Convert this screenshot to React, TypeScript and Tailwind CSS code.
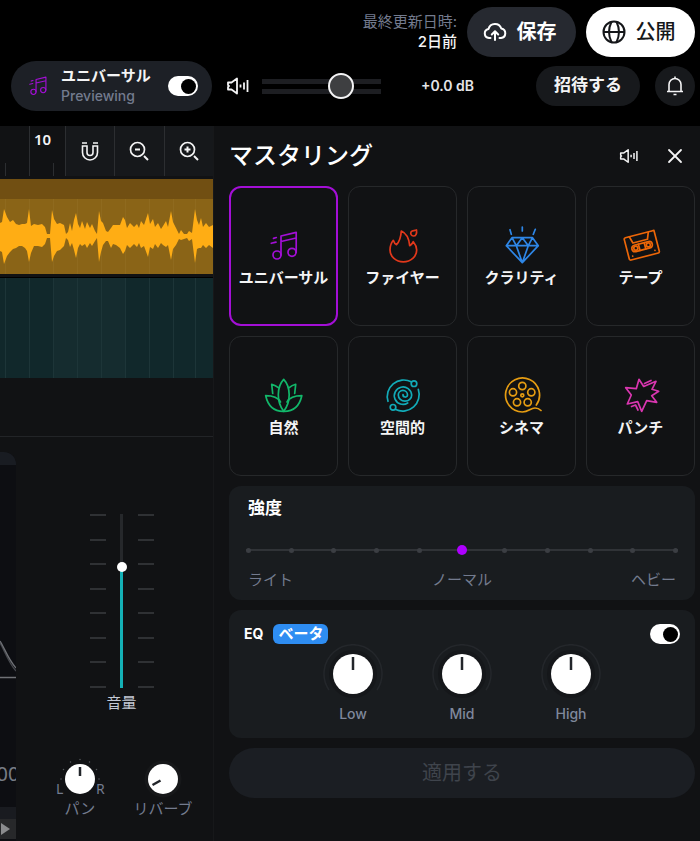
import type { ReactNode } from 'react';
import { X } from 'lucide-react';

type Preset = { name: string; color: string; icon: ReactNode };

// [x, above centre, below centre]
const WAVE = [
  [0, 13, 15], [2, 14, 16], [4, 27, 28], [7, 19, 20], [10, 14, 16], [13, 16, 13],
  [16, 12, 12], [19, 11, 10], [22, 12, 10], [25, 12, 12], [27, 13, 15], [29, 27, 26],
  [31, 10, 17], [34, 12, 10], [38, 11, 10], [42, 12, 11], [45, 9, 8], [47, 2, 2],
  [50, 2, 2], [52, 26, 26], [54, 17, 20], [57, 12, 15], [60, 13, 14], [64, 11, 10],
  [66, 2, 2], [68, 4, 4], [70, 13, 11], [72, 5, 7], [74, 16, 14], [76, 23, 22],
  [78, 12, 12], [80, 8, 8], [82, 15, 10], [85, 7, 8], [87, 14, 12], [90, 8, 7],
  [92, 12, 10], [95, 5, 5], [97, 2, 2], [99, 25, 26], [101, 15, 16], [103, 13, 9],
  [106, 5, 5], [108, 4, 5], [111, 8, 12], [113, 11, 8], [116, 11, 9], [120, 11, 12],
  [123, 19, 18], [125, 16, 15], [127, 8, 9], [130, 13, 12], [134, 9, 8], [137, 12, 11],
  [139, 8, 7], [141, 15, 12], [144, 11, 10], [148, 23, 21], [150, 12, 11], [153, 17, 13],
  [155, 9, 8], [158, 13, 12], [161, 7, 7], [163, 10, 9], [166, 15, 11], [168, 9, 9],
  [171, 25, 24], [173, 14, 13], [176, 8, 9], [179, 2, 3], [181, 6, 4], [184, 2, 3],
  [187, 2, 2], [189, 5, 5], [192, 3, 3], [195, 27, 27], [197, 16, 13], [199, 11, 12],
  [201, 18, 12], [203, 9, 9], [206, 13, 12], [209, 9, 9], [213, 11, 12],
];

const WAVE_MID = 37;
const wavePoints = [
  ...WAVE.map(([x, up]) => `${x},${WAVE_MID - up}`),
  ...[...WAVE].reverse().map(([x, , down]) => `${x},${WAVE_MID + down}`),
].join(' ');

const GRID_LINES = [5, 29, 53, 77, 101, 125, 149, 173, 195];

const notes = (
  <>
    <circle cx="13" cy="29" r="4" />
    <circle cx="28" cy="26.3" r="4" />
    <path d="M17 29V10l15.2-3.6v19.9M17 15.5 32.2 12M9.5 12.4l2.8-.9M7.3 17.3l4.7-1.2" />
  </>
);

const presets: Preset[] = [
  { name: 'ユニバーサル', color: '#a30fd6', icon: notes },
  {
    name: 'ファイヤー',
    color: '#e2381b',
    icon: (
      <>
        <path d="M18.3 5C23 7 26 12 26.7 19.7 28 19 29.5 17.5 30.3 15.7 33 19 33.7 21.5 33.7 24A13.3 11.8 0 0 1 7 24C7 20 8.5 16.5 10.3 14.3 11 16.5 12 18 13.5 18.7 17 15 18 10 18.3 5Z" />
        <path d="M33.5 4C34 7.5 33 10 30.4 10A2.8 2.8 0 0 1 28 6C29.5 4 31 5 33.5 4Z" />
      </>
    ),
  },
  {
    name: 'クラリティ',
    color: '#2e86e6',
    icon: (
      <path d="M10 11.7h20.5l5.8 8-16 17-16-17ZM4.3 19.7h32M10 11.7l4.3 8 6-8 6 8 4.2-8M14.3 19.7l6 17 6-17M20.3 1v4M8 3.7l1.3 4.6M33.3 3.3l-2 5" />
    ),
  },
  {
    name: 'テープ',
    color: '#ec6608',
    icon: (
      <g transform="translate(20.8 19.4) rotate(-14.5)">
        <path d="M12 -11.5H-14a1.5 1.5 0 0 0-1.5 1.5V10a1.5 1.5 0 0 0 1.5 1.5H14a1.5 1.5 0 0 0 1.5-1.5V-11.5H13" />
        <path d="M-10 -11.5 -8 -4.5H7L9.5 -11" />
        <rect x="-10.5" y="-2" width="21" height="6.5" rx="3.2" />
        <circle cx="-6.5" cy="1.2" r="2" />
        <circle cx="6.5" cy="1.2" r="2" />
        <path d="M-3 -2V4.5M3 -2V4.5M-11.5 8v.1M11.5 8v.1" />
      </g>
    ),
  },
  {
    name: '自然',
    color: '#12b76a',
    icon: (
      <>
        <path d="M19.7 3.3C12.5 11 12.5 26 19.7 35.3 27 26 27 11 19.7 3.3Z" />
        <path d="M8.7 17.5 7.7 8.3C10 9 12.5 10.2 14.3 11.7M30.7 17.5l1-9.2C29.4 9 27 10.2 25.2 11.7" />
        <path d="M19.7 35.3C10 35.5 4 30 1.7 19.7 8.5 19.7 14 21.5 16.5 26M19.7 35.3C29.5 35.5 35.5 30 37.8 19.7 31 19.7 25.5 21.5 23 26" />
      </>
    ),
  },
  {
    name: '空間的',
    color: '#12abb8',
    icon: (
      <>
        <path d="M5 25.3A16.5 16.5 0 0 1 28.3 5.8M35.3 13.3A16.5 16.5 0 0 1 12.7 33.5" />
        <circle cx="31" cy="7.7" r="2.8" />
        <circle cx="10" cy="31.3" r="2.8" />
        <path d="M20 18.5A2.25 2.25 0 0 0 24.5 19 4.6 4.6 0 0 0 15.3 19 6.7 6.2 0 0 0 28.7 19 8.7 8.7 0 1 0 24.7 27" />
      </>
    ),
  },
  {
    name: 'シネマ',
    color: '#e59c12',
    icon: (
      <>
        <path d="M34.3 29A17 17 0 1 0 20.3 36C27 36 28 32 33 32 36 32 37.5 33 39 34.5" />
        <circle cx="20.3" cy="10" r="3.6" />
        <circle cx="11" cy="16.3" r="3.6" />
        <circle cx="29.3" cy="16.3" r="3.6" />
        <circle cx="15" cy="26.3" r="3.6" />
        <circle cx="25.7" cy="26.3" r="3.6" />
        <circle cx="20.3" cy="19.3" r="1.5" />
      </>
    ),
  },
  {
    name: 'パンチ',
    color: '#d936b0',
    icon: (
      <path d="M18 3.3 22.7 10.5 35 5.3 31 13.3 37.7 15.3 30.7 19.7 35.7 26.3 25.7 24.7 20.7 35.3 16.7 25.7 6.3 28 10.3 19 4.7 11.7 15.3 12.7ZM23.5 7.5 30 4.5M10.5 30.5 14.5 29 17 34" />
    ),
  },
];

function LineIcon({ className, children }: { className: string; children: ReactNode }) {
  return (
    <svg
      viewBox="0 0 40 40"
      fill="none"
      stroke="currentColor"
      strokeWidth="1.7"
      strokeLinecap="round"
      strokeLinejoin="round"
      className={className}
      aria-hidden
    >
      {children}
    </svg>
  );
}

function SpeakerIcon({ className }: { className: string }) {
  return (
    <svg viewBox="0 0 24 20" fill="none" stroke="currentColor" strokeWidth="1.8" strokeLinejoin="round" className={className} aria-hidden>
      <path d="M2 6.5h3.5L11 2.5v15L5.5 13.5H2V11L3 10 2 9ZM14.5 8.5v3M18 6.5v7M21.5 4v12" />
    </svg>
  );
}

function ZoomIcon({ plus }: { plus?: boolean }) {
  return (
    <svg width="24" height="24" viewBox="0 0 24 24" fill="none" stroke="currentColor" strokeWidth="1.7" aria-hidden>
      <circle cx="10.5" cy="10.5" r="7" />
      <path d="m17 17 4 4" strokeWidth="2" />
      <path d={plus ? 'M7.5 10.5h6M10.5 7.5v6' : 'M8 10.5h5'} strokeWidth="2" />
    </svg>
  );
}

function Switch({ label }: { label: string }) {
  return (
    <input
      type="checkbox"
      role="switch"
      aria-label={label}
      defaultChecked
      className="flex h-5 w-[30px] shrink-0 cursor-pointer appearance-none items-center rounded-full bg-white px-0.5 before:size-[15px] before:rounded-full before:bg-black before:content-[''] checked:justify-end"
    />
  );
}

function EqKnob({ name }: { name: string }) {
  return (
    <label className="flex w-[60px] flex-col items-center text-sm font-medium text-[#7f889c]">
      <input type="range" className="sr-only" defaultValue={50} />
      <svg width="60" height="60" viewBox="0 0 60 60" aria-hidden>
        <path d="M6 46A29 29 0 1 1 54 46" fill="none" stroke="#24272b" strokeWidth="1.5" />
        <circle cx="30" cy="30" r="24" fill="#15171a" />
        <circle cx="30" cy="30" r="20" fill="#fff" />
        <path d="M30 13v13" stroke="#22252a" strokeWidth="2.5" />
      </svg>
      {name}
    </label>
  );
}

function Ticks() {
  return (
    <div className="flex h-[174px] w-4 flex-col justify-between">
      {Array.from({ length: 8 }, (_, i) => (
        <div key={i} className="h-0.5 bg-[#2f3134]" />
      ))}
    </div>
  );
}

function Header() {
  return (
    <header className="flex flex-col gap-1 pt-[7px] pr-[5px] pb-[15px] pl-[11px]">
      <div className="flex items-center justify-end gap-2.5">
        <p className="text-right text-[15px] leading-5 text-[#737b8e]">
          最終更新日時:
          <br />
          <span className="font-medium text-zinc-100">2日前</span>
        </p>
        <button className="flex h-[50px] w-[109px] items-center justify-center gap-2.5 rounded-full bg-[#262930] pr-1 text-xl font-bold text-white">
          <svg width="24" height="24" viewBox="0 0 24 24" fill="none" stroke="currentColor" strokeWidth="2" strokeLinecap="round" strokeLinejoin="round" aria-hidden>
            <path d="M7.5 18H6a4.6 4.6 0 0 1-.5-9.1A6.7 6.7 0 0 1 18.3 8.5 4.8 4.8 0 0 1 18 18h-1.5M12 20v-8.5M8.8 14.5 12 11.3l3.2 3.2" />
          </svg>
          保存
        </button>
        <button className="flex h-[50px] w-[109px] items-center justify-center gap-2.5 rounded-full bg-white pr-1 text-xl font-medium text-[#15171a]">
          <svg width="24" height="24" viewBox="0 0 24 24" fill="none" stroke="currentColor" strokeWidth="2" aria-hidden>
            <circle cx="12" cy="12" r="10.5" />
            <path d="M1.5 12h21M9.5 1.8C6.5 8 6.5 16 9.5 22.2M14.5 1.8C17.5 8 17.5 16 14.5 22.2" />
          </svg>
          公開
        </button>
      </div>

      <div className="flex items-center">
        <div className="flex h-[50px] w-[201px] items-center rounded-full bg-[#1d2026] px-3.5">
          <LineIcon className="size-[26px] text-[#a30fd6]">{notes}</LineIcon>
          <div className="ml-2.5 flex-1 text-[15px] leading-5">
            <p className="font-bold whitespace-nowrap text-zinc-100">ユニバーサル</p>
            <p className="text-sm leading-5 font-medium text-[#737b8e]">Previewing</p>
          </div>
          <Switch label="ユニバーサル" />
        </div>
        <SpeakerIcon className="ml-3.5 h-5 w-6 text-zinc-100" />
        <input
          type="range"
          aria-label="マスター音量"
          defaultValue={71}
          className="ml-3 h-[26px] w-[119px] appearance-none bg-[linear-gradient(transparent_6px,#1d1e22_6px,#1d1e22_11px,transparent_11px,transparent_16px,#1d1e22_16px,#1d1e22_21px,transparent_21px)] [&::-webkit-slider-thumb]:size-[26px] [&::-webkit-slider-thumb]:appearance-none [&::-webkit-slider-thumb]:rounded-full [&::-webkit-slider-thumb]:border-2 [&::-webkit-slider-thumb]:border-zinc-100 [&::-webkit-slider-thumb]:bg-[#3e3f41]"
        />
        <output className="ml-10 text-sm font-semibold text-zinc-200">+0.0 dB</output>
        <div className="ml-auto flex items-center gap-[15px]">
          <button className="h-10 w-[104px] rounded-full bg-[#17191c] text-[17px] font-bold text-zinc-100">
            招待する
          </button>
          <button aria-label="通知" className="flex size-10 items-center justify-center rounded-full bg-[#17191c] text-zinc-100">
            <svg width="22" height="22" viewBox="0 0 22 22" fill="none" stroke="currentColor" strokeWidth="1.6" strokeLinejoin="round" aria-hidden>
              <path d="M3 16.5h16M5 16.5V9.5a6 6 0 0 1 12 0v7M11 3.5V1.5M9.5 19.5h3" />
            </svg>
          </button>
        </div>
      </div>
    </header>
  );
}

function Timeline() {
  return (
    <section>
      <div className="flex h-[50px]">
        <svg width="29" height="50" className="shrink-0" stroke="#2c2e31" aria-hidden>
          <path d="M5.5 37v13" />
        </svg>
        <div className="w-9 border-l border-[#2c2e31] pl-1 font-['Noto_Sans',sans-serif] text-[15px] leading-[26px] font-semibold text-zinc-100">
          10
          <svg width="31" height="24" className="block" stroke="#2c2e31" aria-hidden>
            <path d="M19.5 11v13" />
          </svg>
        </div>
        <div className="grid flex-1 grid-cols-3 text-zinc-100">
          <button aria-label="スナップ" className="flex items-center justify-center border-l border-[#2c2e31] bg-[#16181b]">
            <svg width="20" height="22" viewBox="0 0 20 22" fill="none" stroke="currentColor" strokeWidth="1.6" aria-hidden>
              <path d="M2 3h5M13 3h5M2.5 6v6.5a7.5 7.5 0 0 0 15 0V6H13v6.5a3 3 0 0 1-6 0V6Z" />
            </svg>
          </button>
          <button aria-label="縮小" className="flex items-center justify-center border-l border-[#2c2e31] bg-[#16181b]">
            <ZoomIcon />
          </button>
          <button aria-label="拡大" className="flex items-center justify-center border-l border-[#2c2e31] bg-[#16181b]">
            <ZoomIcon plus />
          </button>
        </div>
      </div>

      <div className="mt-[3px] bg-[#8a6417]">
        <div className="h-5 bg-[#714f12]" />
        <svg viewBox="0 0 213 75" preserveAspectRatio="none" className="block h-[75px] w-full" aria-hidden>
          {GRID_LINES.map((x) => (
            <path key={x} d={`M${x + 0.5} 0V75`} stroke="#8f6a1e" />
          ))}
          <polygon points={wavePoints} fill="#ffad14" />
        </svg>
      </div>

      <div className="mt-[3px] border-t border-black">
        <svg viewBox="0 0 213 100" preserveAspectRatio="none" className="block h-[100px] w-full bg-[#11282b]" aria-hidden>
          <path d="M53 0h72v100H53Z" fill="#152c2f" />
          {GRID_LINES.map((x) => (
            <path key={x} d={`M${x + 0.5} 0V100`} stroke="#1d3538" />
          ))}
        </svg>
      </div>
    </section>
  );
}

function Mixer() {
  return (
    <section className="mt-[58px] flex flex-1 border-t border-[#222427] pt-[15px]">
      <div className="flex w-4 flex-col overflow-hidden rounded-tr-xl bg-[#0d0e12]">
        <div className="h-[13px] bg-[#191c22]" />
        <svg width="16" height="45" className="mt-[172px]" fill="none" strokeWidth="1.3" aria-hidden>
          <path d="M0 6C4 12 8 25 16 34" stroke="#45474c" />
          <path d="M0 4C4 10 8 22 16 31M0 40.5h16" stroke="#6f7176" />
        </svg>
        <span className="mt-[72px] self-center font-['Noto_Sans',sans-serif] text-xl leading-10 text-[#777c85]">00</span>
        <div className="mt-[13px] h-3 bg-[#191b20]" />
        <button aria-label="右へスクロール" className="flex h-5 items-center bg-[#27282a]">
          <svg width="12" height="14" fill="#8b8c8e" aria-hidden>
            <path d="M1 1 10 7 1 13Z" />
          </svg>
        </button>
      </div>

      <div className="flex flex-1 flex-col items-center pt-[62px] pl-[14px] text-[15px] leading-5 text-[#737b8e]">
        <div className="flex items-center gap-2.5">
          <Ticks />
          <input
            id="volume"
            type="range"
            defaultValue={71}
            className="h-[174px] w-3 appearance-none bg-[linear-gradient(#26282b_30%,#14b1b6_30%)] bg-[length:3px_100%] bg-center bg-no-repeat [direction:rtl] [writing-mode:vertical-lr] [&::-webkit-slider-thumb]:size-2.5 [&::-webkit-slider-thumb]:appearance-none [&::-webkit-slider-thumb]:rounded-full [&::-webkit-slider-thumb]:bg-white"
          />
          <Ticks />
        </div>
        <label htmlFor="volume" className="mt-[5px] text-[#c3c8d4]">
          音量
        </label>

        <div className="mt-11 flex">
          <label className="flex w-[83px] flex-col items-center">
            <input type="range" className="sr-only" defaultValue={50} />
            <span className="flex items-end font-['Noto_Sans',sans-serif] text-sm leading-5">
              <span className="w-2">L</span>
              <svg width="32" height="42" viewBox="0 0 32 42" className="overflow-visible" aria-hidden>
                <circle cx="16" cy="22" r="15" fill="#fff" />
                <path d="M16 10v9" stroke="#22252a" strokeWidth="2.5" />
                <path d="M16 2.5v.1M6.5 5v.1M25.5 5v.1M-.5 12.5v.1M32.5 12.5v.1M-3 22v.1M35 22v.1" stroke="#55585d" strokeWidth="1.5" strokeLinecap="round" />
              </svg>
              <span className="w-2">R</span>
            </span>
            パン
          </label>
          <label className="flex w-[83px] flex-col items-center">
            <input type="range" className="sr-only" defaultValue={0} />
            <svg width="42" height="42" viewBox="0 0 42 42" aria-hidden>
              <circle cx="21" cy="22" r="18.5" fill="#17181a" />
              <circle cx="21" cy="22" r="15" fill="#fff" />
              <path d="m10.5 28 8-4.5" stroke="#22252a" strokeWidth="2.5" />
            </svg>
            リバーブ
          </label>
        </div>
      </div>
    </section>
  );
}

function Mastering() {
  return (
    <main className="flex min-w-0 flex-1 flex-col gap-2.5 border-l border-[#17181a] pr-[5px] pb-10 pl-[15px]">
      <div className="flex h-[50px] items-center pt-2.5 text-zinc-100">
        <h1 className="flex-1 text-2xl leading-10 font-medium text-white">マスタリング</h1>
        <button aria-label="試聴">
          <SpeakerIcon className="h-[18px] w-5" />
        </button>
        <button aria-label="閉じる" className="mr-2 ml-6">
          <X size={24} strokeWidth={1.8} />
        </button>
      </div>

      <div className="grid grid-cols-4 gap-2.5">
        {presets.map((preset, i) => (
          <button
            key={preset.name}
            aria-pressed={i === 0}
            className={
              i === 0
                ? 'flex h-[140px] flex-col items-center justify-center rounded-xl border-2 border-[#a30fd6] pt-[3px]'
                : 'flex h-[140px] flex-col items-center justify-center rounded-xl border border-[#26282a] pt-[3px]'
            }
          >
            <span style={{ color: preset.color }}>
              <LineIcon className="size-10">{preset.icon}</LineIcon>
            </span>
            <span className="text-[15px] leading-6 font-bold whitespace-nowrap text-zinc-100">
              {preset.name}
            </span>
          </button>
        ))}
      </div>

      <section className="rounded-xl bg-[#191c1f] px-[17px] pt-2.5 pb-[9px]">
        <label htmlFor="strength" className="block pl-0.5 text-[17px] leading-6 font-bold text-white">
          強度
        </label>
        <div className="relative mt-[25px] flex h-2.5 items-center justify-between">
          <div className="absolute inset-x-0 top-1 h-0.5 bg-[#303337]" />
          {Array.from({ length: 11 }, (_, i) => (
            <div key={i} className="relative size-[5px] rounded-full bg-[#3b3e43]" />
          ))}
          <input
            id="strength"
            type="range"
            min={0}
            max={10}
            defaultValue={5}
            className="absolute inset-0 w-full appearance-none bg-transparent [&::-webkit-slider-thumb]:size-2.5 [&::-webkit-slider-thumb]:appearance-none [&::-webkit-slider-thumb]:rounded-full [&::-webkit-slider-thumb]:bg-[#ae00ff]"
          />
        </div>
        <div className="mt-3.5 grid grid-cols-3 px-0.5 text-[15px] leading-[22px] text-[#737b8e]">
          <span>ライト</span>
          <span className="text-center">ノーマル</span>
          <span className="text-right">ヘビー</span>
        </div>
      </section>

      <section className="rounded-xl bg-[#191c1f] px-[15px] py-3.5">
        <div className="flex h-5 items-center gap-2.5">
          <h2 className="text-sm font-bold text-white">EQ</h2>
          <span className="rounded-md bg-[#2e8df2] px-[5px] text-[15px] leading-5 font-bold text-white">ベータ</span>
          <div className="ml-auto flex">
            <Switch label="EQ" />
          </div>
        </div>
        <div className="flex justify-center gap-[49px]">
          <EqKnob name="Low" />
          <EqKnob name="Mid" />
          <EqKnob name="High" />
        </div>
      </section>

      <button disabled className="h-[50px] rounded-full bg-[#1b1e23] text-xl text-[#3f444c]">
        適用する
      </button>
    </main>
  );
}

export default function App() {
  return (
    <div className="flex min-h-screen flex-col bg-black font-['Inter','Noto_Sans_CJK_JP',sans-serif]" lang="ja">
      <Header />
      <div className="flex flex-1 bg-[#111214]">
        <div className="flex w-[213px] shrink-0 flex-col">
          <Timeline />
          <Mixer />
        </div>
        <Mastering />
      </div>
    </div>
  );
}
